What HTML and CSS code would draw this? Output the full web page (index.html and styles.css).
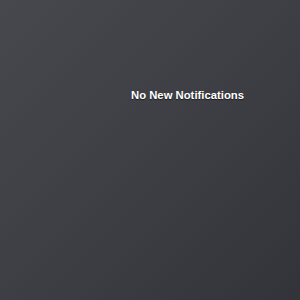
FILE: index.html
```html
<!DOCTYPE html>
<html lang="en">
<head>
    <meta charset="UTF-8">
    <title>Notifications</title>
    <link rel="stylesheet" href="styles.css">
</head>
<body>
    <div class="notification-center">
        <p class="empty-message">No New Notifications</p>
    </div>
</body>
</html>
```

FILE: styles.css
```css
* {
    margin: 0;
    padding: 0;
    box-sizing: border-box;
}

html, body {
    width: 100%;
    height: 100%;
}

body {
    font-family: 'Liberation Sans', Arial, sans-serif;
    background: linear-gradient(135deg, #47484d 0%, #3e3f44 50%, #333439 100%);
}

.notification-center {
    height: 100%;
    padding: 89px 0 0 131px;
}

.empty-message {
    color: #ffffff;
    font-size: 11.3px;
    font-weight: bold;
    line-height: 13px;
    text-shadow: 0 1px 1px rgba(0, 0, 0, 0.6);
}
```
